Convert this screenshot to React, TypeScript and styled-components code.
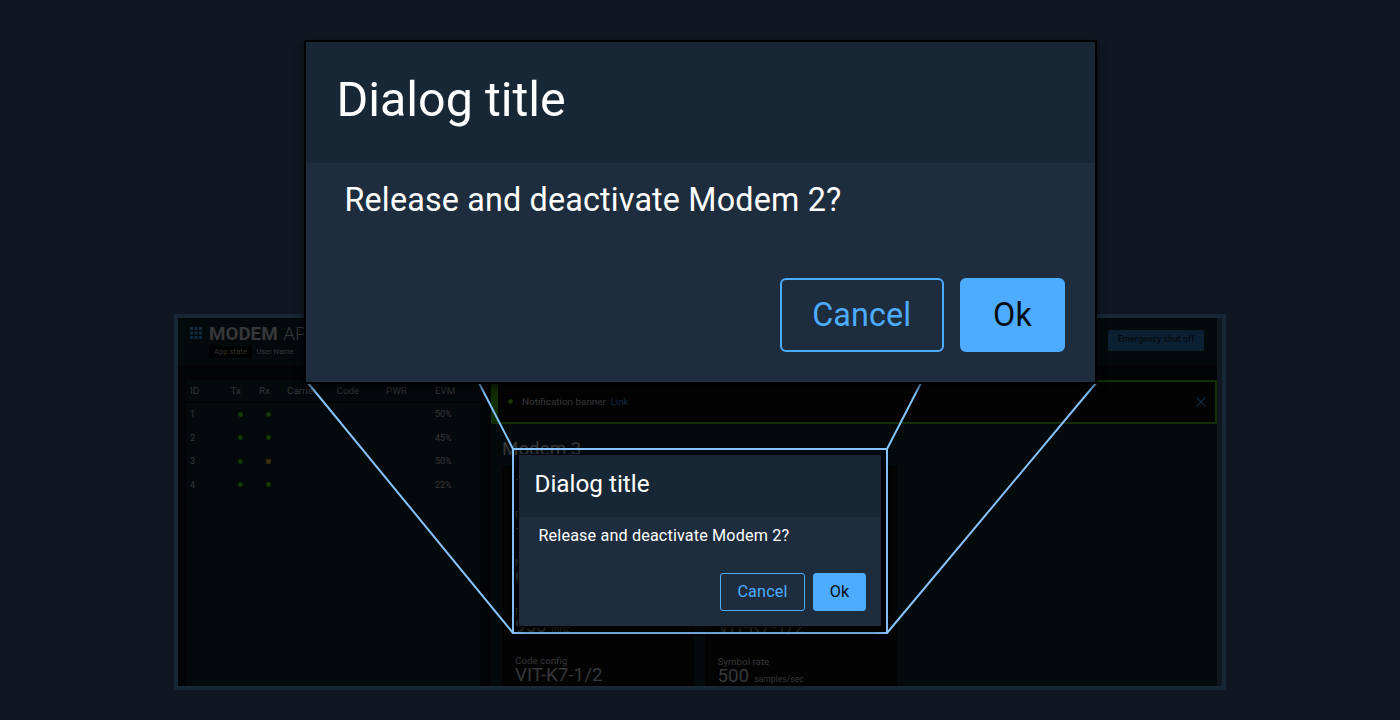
import React from "react";
import styled, { createGlobalStyle } from "styled-components";

const Global = createGlobalStyle`
  * { box-sizing: border-box; }
  body { margin: 0; background: #101722; font-family: Roboto, sans-serif; overflow: hidden; }
`;

const Stage = styled.main`
  position: relative;
  width: 1400px;
  height: 720px;
  padding: 314px 174px 30px;
  background: #101722;
  overflow: hidden;
`;

const AppFrame = styled.section`
  height: 376px;
  border: 4px solid #182735;
  padding-right: 5px;
  background: #0f1721;
`;

const AppWindow = styled.div`
  height: 368px;
  background: #030405;
  color: #363738;
  overflow: hidden;
`;

const AppHeader = styled.header`
  display: flex;
  height: 48px;
  padding: 8px 13px 0 12px;
  background: #04090c;
`;

const Waffle = styled.svg`
  width: 12px;
  height: 12px;
  margin: 1px 7px 0 0;
  fill: #102a42;
`;

const Brand = styled.div`
  flex: 1;
`;

const AppName = styled.h1`
  margin: 0;
  font-size: 18.8px;
  line-height: 16px;
  font-weight: 300;
  b { font-weight: 700; margin-right: 1px; }
`;

const Meta = styled.div`
  display: flex;
  gap: 4.5px;
  margin-top: 3.5px;
  font-size: 7.5px;
  line-height: 12.5px;
`;

const StateTag = styled.span`
  width: 43px;
  border-radius: 2px;
  background: #000;
  text-align: center;
  letter-spacing: 0.12px;
`;

const Emergency = styled.button`
  width: 96px;
  height: 21px;
  margin-top: 4px;
  padding: 0 0 2px;
  border: 0;
  border-radius: 1.5px;
  background: #0c2033;
  color: #030a10;
  font: 500 8.4px/19px Roboto, sans-serif;
  letter-spacing: 0.2px;
`;

const Columns = styled.div`
  display: flex;
  gap: 11px;
  height: 320px;
  padding: 14px 0 0 8px;
`;

const ModemTable = styled.div`
  width: 294px;
  display: flex;
  flex-direction: column;
`;

const Row = styled.div<{ $head?: boolean }>`
  display: grid;
  grid-template-columns: 40.5px 28.5px 28px 49.5px 49.5px 49px 1fr;
  align-items: center;
  height: ${(p) => (p.$head ? 21 : 23.5)}px;
  margin-bottom: ${(p) => (p.$head ? 2 : 0)}px;
  padding-left: 4px;
  border-bottom: ${(p) => (p.$head ? "none" : "1px solid #030709")};
  background: #04090b;
  font-size: ${(p) => (p.$head ? 9.8 : 9)}px;
  white-space: nowrap;
`;

const Cell = styled.span<{ $pad?: number }>`
  display: flex;
  padding-left: ${(p) => p.$pad ?? 0}px;
`;

const TableRest = styled.div`
  flex: 1;
  background: #04090b;
`;

const Dot = styled.svg`
  display: block;
  flex: none;
  width: 5px;
  height: 5px;
`;

const Mark = ({ caution }: { caution?: boolean }) => (
  <Dot viewBox="0 0 5 5">
    {caution ? (
      <rect x="0.3" y="0.3" width="4.4" height="4.4" fill="#40320f" />
    ) : (
      <circle cx="2.5" cy="2.5" r="2.4" fill="#153a03" />
    )}
  </Dot>
);

const Detail = styled.div`
  flex: 1;
  background: #04090b;
`;

const Banner = styled.div`
  display: flex;
  align-items: center;
  height: 44px;
  padding: 0 9px 1px 9.5px;
  border: 2px solid #122e03;
  border-left-width: 7px;
  border-radius: 1px;
  background: #030304;
  font-size: 9.9px;
`;

const BannerText = styled.span`
  flex: 1;
  margin-left: 9.5px;
`;

const BannerLink = styled.a`
  margin-left: 4.5px;
  color: #0f2a42;
`;

const Close = styled.svg`
  width: 10px;
  height: 10px;
  stroke: #112a40;
  stroke-width: 1.1;
`;

const DetailTitle = styled.h2`
  height: 42px;
  margin: 0;
  padding: 14px 0 0 11px;
  font-size: 18.8px;
  line-height: 23px;
  font-weight: 400;
`;

const Cards = styled.div`
  display: flex;
  gap: 11px;
  margin-left: 11px;
  height: 230px;
`;

const Card = styled.div<{ $second?: boolean }>`
  display: flex;
  flex-direction: column;
  gap: 19.7px;
  width: ${(p) => (p.$second ? 192.5 : 191.5)}px;
  padding: ${(p) => (p.$second ? 142 : 5)}px 12.5px 0 13px;
  background: #030304;
`;

const Field = styled.div`
  flex: none;
`;

const Label = styled.div`
  height: 10px;
  font-size: 9.8px;
  line-height: 10px;
`;

const Value = styled.div`
  height: 19px;
  font-size: 18.8px;
  line-height: 19px;
  font-weight: 400;
  small { font-size: 8.6px; margin-left: 5px; }
`;

const Callout = styled.svg`
  position: absolute;
  left: 0;
  top: 0;
  fill: none;
  stroke: #86c3ff;
  stroke-width: 2;
`;

/* $k is the magnification: 1 for the in-app dialog, 2 for the enlarged one. */
const DialogBox = styled.div<{ $k: number }>`
  position: absolute;
  left: ${(p) => (p.$k === 1 ? 519 : 304)}px;
  top: ${(p) => (p.$k === 1 ? 455 : 40)}px;
  width: ${(p) => (p.$k === 1 ? 362 : 793)}px;
  height: ${(p) => (p.$k === 1 ? 171 : 344)}px;
  border: ${(p) => (p.$k === 1 ? "none" : "2px solid #000")};
  background: #1e2d3e;
  color: #fff;
  box-shadow: ${(p) =>
    p.$k === 1
      ? "0 0 0 1px #000, 0 4px 7px rgba(0,0,0,.75)"
      : "0 4px 8px rgba(0,0,0,.65)"};
`;

const DialogHead = styled.div<{ $k: number }>`
  height: ${(p) => (p.$k === 1 ? 62 : 121)}px;
  padding-left: ${(p) => (p.$k === 1 ? 15.5 : 30.5)}px;
  background: #182735;
  font-size: ${(p) => (p.$k === 1 ? 24.3 : 48.4)}px;
  line-height: ${(p) => (p.$k === 1 ? 58 : 116)}px;
`;

const DialogText = styled.p<{ $k: number }>`
  margin: 0;
  height: ${(p) => (p.$k === 1 ? 56 : 114.5)}px;
  padding-left: ${(p) => (p.$k === 1 ? 19.5 : 38.5)}px;
  font-size: ${(p) => (p.$k === 1 ? 16.2 : 32.3)}px;
  line-height: ${(p) => (p.$k === 1 ? 37 : 74)}px;
  letter-spacing: ${(p) => (p.$k === 1 ? 0.14 : 0.17)}px;
`;

const Actions = styled.div<{ $k: number }>`
  display: flex;
  justify-content: flex-end;
  gap: ${(p) => (p.$k === 1 ? 8 : 16)}px;
  padding-right: ${(p) => (p.$k === 1 ? 15 : 30)}px;
`;

const DialogButton = styled.button<{ $k: number; $primary?: boolean }>`
  width: ${(p) => (p.$primary ? (p.$k === 1 ? 53 : 105) : p.$k === 1 ? 85 : 164.5)}px;
  height: ${(p) => (p.$k === 1 ? 38 : 74.5)}px;
  padding: 0 0 ${(p) => (p.$k === 1 ? 2 : 0)}px;
  border: ${(p) => p.$k}px solid #4dacff;
  border-radius: ${(p) => (p.$k === 1 ? 3 : 6)}px;
  background: ${(p) => (p.$primary ? "#4dacff" : "transparent")};
  color: ${(p) => (p.$primary ? "#080c11" : "#4dacff")};
  font: 400 ${(p) => (p.$k === 1 ? 16.2 : 32.3)}px Roboto, sans-serif;
  line-height: ${(p) => (p.$k === 1 ? 19 : 38)}px;
  letter-spacing: 0.14px;
`;

const Dialog = ({ k }: { k: number }) => (
  <DialogBox $k={k}>
    <DialogHead $k={k}>Dialog title</DialogHead>
    <DialogText $k={k}>Release and deactivate Modem 2?</DialogText>
    <Actions $k={k}>
      <DialogButton $k={k}>Cancel</DialogButton>
      <DialogButton $k={k} $primary>Ok</DialogButton>
    </Actions>
  </DialogBox>
);

const modems = [
  { id: 1, evm: "50%" },
  { id: 2, evm: "45%" },
  { id: 3, evm: "50%", caution: true },
  { id: 4, evm: "22%" },
];

type FieldData = { label?: string; value: string; unit?: string };

const carrierFields: FieldData[] = [
  { value: "–" },
  { label: "Power", value: "–" },
  { label: "Modulation", value: "QPSK" },
  { label: "Frequency", value: "950", unit: "mHz" },
  { label: "Code config", value: "VIT-K7-1/2" },
];

const codeFields: FieldData[] = [
  { label: "Code config", value: "VIT-K7-1/2" },
  { label: "Symbol rate", value: "500", unit: "samples/sec" },
];

const Fields = ({ items }: { items: FieldData[] }) => (
  <>
    {items.map(({ label, value, unit }, i) => (
      <Field key={i}>
        {label && <Label>{label}</Label>}
        <Value>{value}{unit && <small>{unit}</small>}</Value>
      </Field>
    ))}
  </>
);

export default function App() {
  return (
    <Stage>
      <Global />
      <AppFrame>
        <AppWindow>
          <AppHeader>
            <Waffle viewBox="0 0 12 12">
              {[0, 4.5, 9].map((y) => [0, 4.5, 9].map((x) => (
                <rect key={`${x}-${y}`} x={x} y={y} width="3" height="3" />
              )))}
            </Waffle>
            <Brand>
              <AppName><b>MODEM</b> APP</AppName>
              <Meta><StateTag>App state</StateTag><span>User Name</span></Meta>
            </Brand>
            <Emergency>Emergency shut off</Emergency>
          </AppHeader>
          <Columns>
            <ModemTable>
              <Row $head>
                <Cell>ID</Cell><Cell>Tx</Cell><Cell>Rx</Cell>
                <Cell>Carrier</Cell><Cell>Code</Cell><Cell>PWR</Cell><Cell>EVM</Cell>
              </Row>
              {modems.map((m) => (
                <Row key={m.id}>
                  <Cell>{m.id}</Cell>
                  <Cell $pad={7}><Mark /></Cell>
                  <Cell $pad={7.2}><Mark caution={m.caution} /></Cell>
                  <Cell /><Cell /><Cell />
                  <Cell>{m.evm}</Cell>
                </Row>
              ))}
              <TableRest />
            </ModemTable>
            <Detail>
              <Banner>
                <Mark />
                <BannerText>Notification banner<BannerLink>Link</BannerLink></BannerText>
                <Close viewBox="0 0 10 10"><path d="M.5.5l9 9M9.5.5l-9 9" /></Close>
              </Banner>
              <DetailTitle>Modem 3</DetailTitle>
              <Cards>
                <Card><Fields items={carrierFields} /></Card>
                <Card $second><Fields items={codeFields} /></Card>
              </Cards>
            </Detail>
          </Columns>
        </AppWindow>
      </AppFrame>
      <Callout width="1400" height="720" viewBox="0 0 1400 720">
        <path d="M308 383L513 633M479 383L513 449M921 383L887 449M1096 383L887 633" />
        <rect x="513" y="449" width="374" height="184" />
      </Callout>
      <Dialog k={1} />
      <Dialog k={2} />
    </Stage>
  );
}
